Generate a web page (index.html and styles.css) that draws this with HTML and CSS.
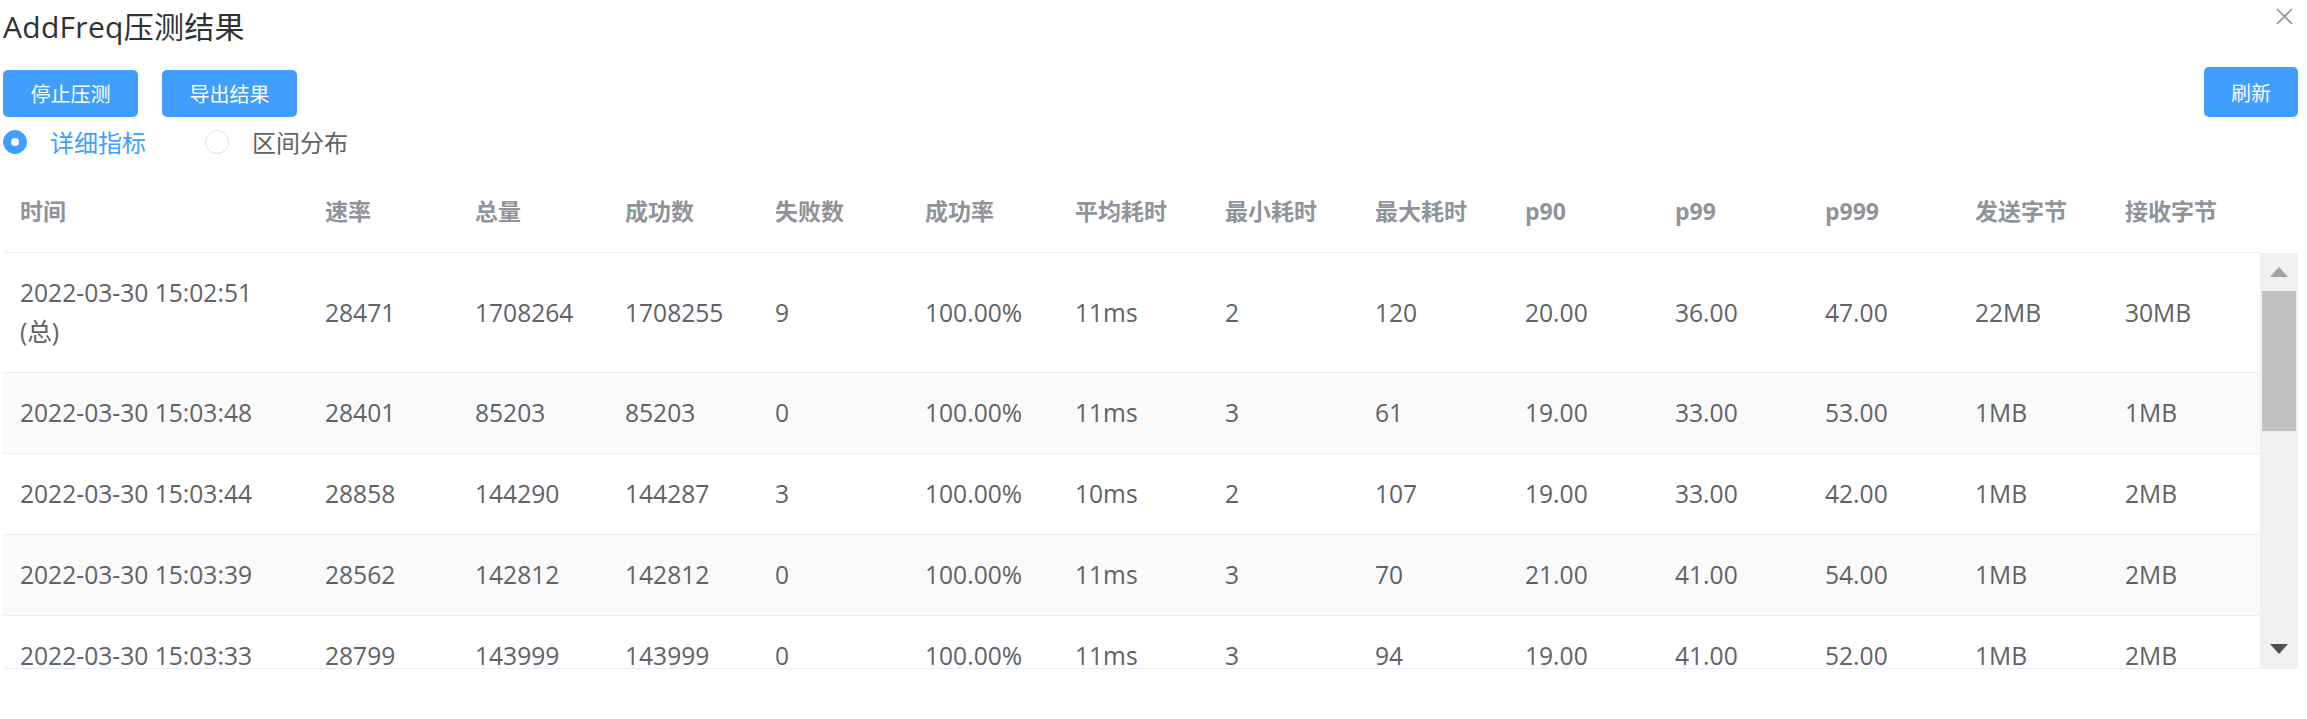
FILE: index.html
```html
<!DOCTYPE html>
<html lang="zh-CN">
<head>
<meta charset="utf-8">
<title>AddFreq压测结果</title>
<link rel="stylesheet" href="styles.css">
</head>
<body>
<div class="page">
  <div class="header">
    <div class="title">AddFreq压测结果</div>
    <div class="close">
      <svg width="17" height="17" viewBox="0 0 17 17"><path d="M1 1 L16 16 M16 1 L1 16" stroke="#909399" stroke-width="1.6" fill="none"/></svg>
    </div>
  </div>
  <div class="toolbar">
    <div class="btn-group">
      <button class="btn btn-mini">停止压测</button>
      <button class="btn btn-mini">导出结果</button>
    </div>
    <button class="btn btn-refresh">刷新</button>
  </div>
  <div class="radios">
    <label class="radio checked"><span class="radio-inner"></span><span class="radio-label">详细指标</span></label>
    <label class="radio"><span class="radio-inner"></span><span class="radio-label">区间分布</span></label>
  </div>
  <div class="table">
    <div class="thead">
      <div class="thead-cells">
        <div class="th">时间</div>
        <div class="th">速率</div>
        <div class="th">总量</div>
        <div class="th">成功数</div>
        <div class="th">失败数</div>
        <div class="th">成功率</div>
        <div class="th">平均耗时</div>
        <div class="th">最小耗时</div>
        <div class="th">最大耗时</div>
        <div class="th">p90</div>
        <div class="th">p99</div>
        <div class="th">p999</div>
        <div class="th">发送字节</div>
        <div class="th">接收字节</div>
      </div>
      <div class="gutter"></div>
    </div>
    <div class="tbody-wrap">
      <div class="tbody">
        <div class="tr">
          <div class="td">2022-03-30 15:02:51<br>(总)</div><div class="td">28471</div><div class="td">1708264</div><div class="td">1708255</div><div class="td">9</div><div class="td">100.00%</div><div class="td">11ms</div><div class="td">2</div><div class="td">120</div><div class="td">20.00</div><div class="td">36.00</div><div class="td">47.00</div><div class="td">22MB</div><div class="td">30MB</div>
        </div>
        <div class="tr striped">
          <div class="td">2022-03-30 15:03:48</div><div class="td">28401</div><div class="td">85203</div><div class="td">85203</div><div class="td">0</div><div class="td">100.00%</div><div class="td">11ms</div><div class="td">3</div><div class="td">61</div><div class="td">19.00</div><div class="td">33.00</div><div class="td">53.00</div><div class="td">1MB</div><div class="td">1MB</div>
        </div>
        <div class="tr">
          <div class="td">2022-03-30 15:03:44</div><div class="td">28858</div><div class="td">144290</div><div class="td">144287</div><div class="td">3</div><div class="td">100.00%</div><div class="td">10ms</div><div class="td">2</div><div class="td">107</div><div class="td">19.00</div><div class="td">33.00</div><div class="td">42.00</div><div class="td">1MB</div><div class="td">2MB</div>
        </div>
        <div class="tr striped">
          <div class="td">2022-03-30 15:03:39</div><div class="td">28562</div><div class="td">142812</div><div class="td">142812</div><div class="td">0</div><div class="td">100.00%</div><div class="td">11ms</div><div class="td">3</div><div class="td">70</div><div class="td">21.00</div><div class="td">41.00</div><div class="td">54.00</div><div class="td">1MB</div><div class="td">2MB</div>
        </div>
        <div class="tr">
          <div class="td">2022-03-30 15:03:33</div><div class="td">28799</div><div class="td">143999</div><div class="td">143999</div><div class="td">0</div><div class="td">100.00%</div><div class="td">11ms</div><div class="td">3</div><div class="td">94</div><div class="td">19.00</div><div class="td">41.00</div><div class="td">52.00</div><div class="td">1MB</div><div class="td">2MB</div>
        </div>
      </div>
      <div class="scrollbar">
        <div class="sb-btn"><span class="arrow-up"></span></div>
        <div class="sb-track"><div class="sb-thumb"></div></div>
        <div class="sb-btn"><span class="arrow-down"></span></div>
      </div>
    </div>
  </div>
</div>
</body>
</html>
```

FILE: styles.css
```css
* { box-sizing: border-box; }
html, body { margin: 0; padding: 0; background: #fff; }
body {
  font-family: "Open Sans", "Noto Sans CJK SC", sans-serif;
  color: #606266;
}
.page { padding: 0 9px 0 3px; }

.header {
  display: flex;
  justify-content: space-between;
  height: 58px;
}
.title {
  font-size: 30px;
  line-height: 40px;
  margin-top: 7px;
  color: #303133;
  letter-spacing: 0.3px;
}
.close {
  width: 17px;
  height: 17px;
  margin-top: 8px;
  margin-right: 5px;
}
.close svg { display: block; }

.toolbar {
  display: flex;
  justify-content: space-between;
  align-items: flex-end;
  height: 59px;
}
.btn-group { display: flex; gap: 24px; }
.btn {
  font-family: "Open Sans", "Noto Sans CJK SC", sans-serif;
  border: none;
  background: #409eff;
  color: #fff;
  border-radius: 5px;
  font-size: 20px;
  cursor: pointer;
  padding: 0;
}
.btn-mini { width: 135px; height: 47px; }
.btn-refresh { width: 94px; height: 50px; }

.radios {
  display: flex;
  align-items: center;
  height: 49px;
  gap: 59px;
}
.radio {
  display: flex;
  align-items: center;
  font-size: 24px;
  color: #606266;
}
.radio-inner {
  width: 24px;
  height: 24px;
  border-radius: 50%;
  border: 1px solid #dcdfe6;
  background: #fff;
  position: relative;
  margin-right: 23px;
}
.radio.checked .radio-inner {
  background: #409eff;
  border-color: #409eff;
}
.radio.checked .radio-inner::after {
  content: "";
  position: absolute;
  width: 8px;
  height: 8px;
  border-radius: 50%;
  background: #fff;
  left: 50%;
  top: 50%;
  transform: translate(-50%, -50%);
}
.radio.checked .radio-label { color: #409eff; }

.table { margin-top: 6px; width: 2295px; }
.thead { display: flex; }
.thead-cells {
  width: 2257px;
  display: grid;
  grid-template-columns: 305px repeat(13, 150px);
  border-bottom: 1px solid #ebeef5;
}
.gutter { width: 38px; }
.th {
  padding: 20px 0 21px 17px;
  line-height: 39px;
  font-size: 23px;
  font-weight: 700;
  color: #909399;
}
.tbody-wrap {
  display: flex;
  height: 416px;
  border-bottom: 1px solid #ebeef5;
}
.tbody {
  width: 2257px;
  overflow: hidden;
}
.tr {
  display: grid;
  grid-template-columns: 305px repeat(13, 150px);
  align-items: center;
  border-bottom: 1px solid #ebeef5;
  background: #fff;
}
.tr.striped { background: #fafafa; }
.td {
  padding: 20px 0 21px 17px;
  line-height: 39px;
  font-size: 24.6px;
  color: #606266;
  white-space: nowrap;
}

.scrollbar {
  width: 38px;
  background: #f1f1f1;
  display: flex;
  flex-direction: column;
}
.sb-btn {
  height: 38px;
  display: flex;
  align-items: center;
  justify-content: center;
}
.arrow-up {
  width: 0; height: 0;
  border-left: 9px solid transparent;
  border-right: 9px solid transparent;
  border-bottom: 10px solid #a3a3a3;
}
.arrow-down {
  width: 0; height: 0;
  border-left: 9px solid transparent;
  border-right: 9px solid transparent;
  border-top: 10px solid #505050;
}
.sb-track { flex: 1; padding: 0 2px; }
.sb-thumb { height: 140px; background: #c1c1c1; }
```
